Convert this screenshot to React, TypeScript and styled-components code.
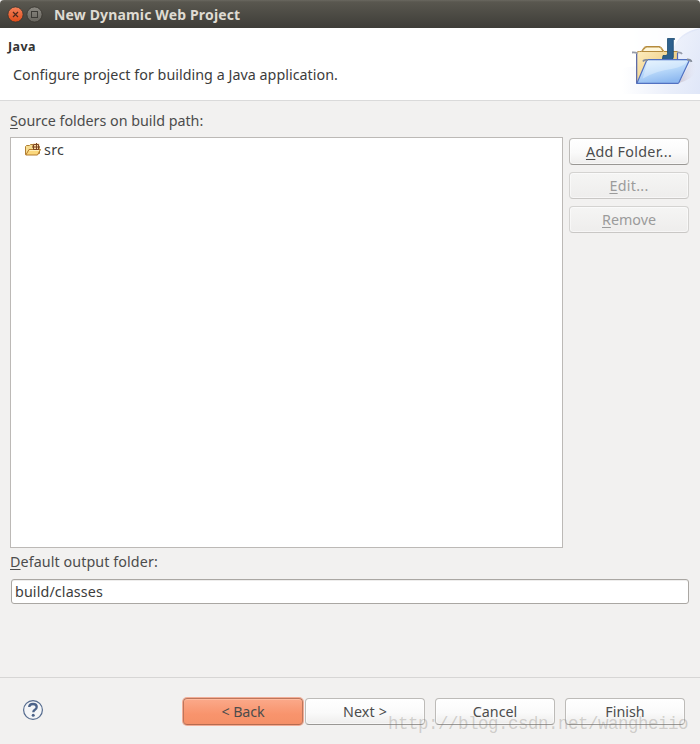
import React from "react";
import styled, { createGlobalStyle } from "styled-components";

const GlobalStyle = createGlobalStyle`
  * { box-sizing: border-box; }
  body { margin: 0; background: #f2f1f0; overflow: hidden; }
  button, input { font: inherit; }
`;

const Window = styled.div`
  position: relative;
  display: flex;
  flex-direction: column;
  width: 700px;
  height: 744px;
  background: #f2f1f0;
  color: #4c4c4c;
  font-family: "Noto Sans", "Open Sans", sans-serif;
  font-size: 14.3px;
  line-height: 20px;
`;

const TitleBar = styled.header`
  display: flex;
  align-items: center;
  height: 28px;
  flex: none;
  padding-left: 7px;
  background: linear-gradient(#6a6860 0, #59574f 2px, #3e3d38 100%);
  border-radius: 4px 4px 0 0;
`;

const Controls = styled.svg`
  display: block;
  flex: none;
`;

const Text = styled.span<{ $spacing?: number }>`
  letter-spacing: ${(p) => p.$spacing ?? 0}px;
  white-space: nowrap;
`;

const Title = styled(Text)`
  margin-left: 11px;
  padding-top: 1px;
  color: #dfdbd2;
  font-size: 14px;
  font-weight: 700;
`;

const Banner = styled.section`
  display: flex;
  justify-content: space-between;
  flex: none;
  height: 73px;
  background: #fff;
  border-bottom: 1px solid #dadada;
`;

const BannerText = styled.div`
  display: flex;
  flex-direction: column;
  padding: 9px 0 0 8px;
  color: #3c3c3c;
`;

const Heading = styled(Text)`
  color: #333;
  font-size: 12.5px;
  font-weight: 700;
`;

const Description = styled(Text)`
  margin: 8px 0 0 5px;
`;

const Main = styled.main`
  display: flex;
  flex-direction: column;
  flex: none;
  height: 577px;
  padding: 10px 11px 0 10px;
  border-bottom: 1px solid #d7d6d5;
`;

const Label = styled.label`
  display: block;
  height: 20px;
  flex: none;
`;

const Mnemonic = styled.span`
  text-decoration: underline;
  text-decoration-thickness: 1px;
  text-underline-offset: 2px;
`;

const Sources = styled.div`
  display: flex;
  gap: 6px;
  height: 411px;
  margin: 6px 0 4px;
`;

const FolderList = styled.div`
  width: 553px;
  padding: 2px 0 0 14px;
  background: #fff;
  border: 1px solid #bcb9b6;
`;

const FolderRow = styled.div`
  display: flex;
  align-items: center;
  gap: 3px;
  height: 20px;
  color: #3c3c3c;
`;

const ButtonColumn = styled.div`
  display: flex;
  flex-direction: column;
  gap: 7px;
  padding-top: 1px;
`;

const Button = styled.button<{ $active?: boolean }>`
  display: flex;
  align-items: center;
  justify-content: center;
  width: 120px;
  height: 27px;
  padding: 0;
  color: #4c4c4c;
  border: 1px solid ${(p) => (p.$active ? "#bd765b" : "#bdbbb8")};
  border-bottom-color: ${(p) => (p.$active ? "#b66b50" : "#999794")};
  border-radius: 4px;
  background: ${(p) =>
    p.$active
      ? "linear-gradient(#fba98a, #f8946d 60%, #f59068)"
      : "linear-gradient(#ffffff, #fafafa 55%, #eeedec)"};
  box-shadow: ${(p) =>
    p.$active ? "0 0 0 1px #f3ad96, inset 0 1px #ffbb9f" : "inset 0 0 0 1px rgba(255,255,255,.5)"};

  &:disabled {
    color: #9b9b9b;
    border-color: #d4d3d1;
    border-bottom-color: #c9c7c5;
    background: linear-gradient(#f5f5f4, #eeedec);
  }
`;

const OutputInput = styled.input`
  width: 678px;
  height: 25px;
  margin: 7px 0 0 1px;
  padding: 0 3px;
  color: #3c3c3c;
  letter-spacing: 0.12px;
  background: #fff;
  border: 1px solid #aaa7a3;
  border-radius: 3px;
  box-shadow: inset 0 1px #eeedec;
  outline: none;
`;

const Footer = styled.footer`
  display: flex;
  align-items: flex-start;
  height: 66px;
  padding: 20px 15px 0 22px;
`;

const Help = styled.svg`
  margin-top: 1px;
  flex: none;
`;

const Actions = styled.div`
  display: flex;
  gap: 10px;
  margin-left: auto;
`;

const Steps = styled.div`
  display: flex;
  gap: 2px;
`;

const Watermark = styled.div`
  position: absolute;
  left: 388px;
  top: 714px;
  color: rgba(120, 116, 108, 0.3);
  font-family: "Liberation Mono", monospace;
  font-size: 17.5px;
  letter-spacing: -0.5px;
  white-space: nowrap;
  pointer-events: none;
`;

const WindowControls = () => (
  <Controls width="36" height="18" viewBox="0 0 36 18">
    <defs>
      <linearGradient id="close" x2="0" y2="1">
        <stop stopColor="#f4835c" />
        <stop offset="1" stopColor="#df4b18" />
      </linearGradient>
      <linearGradient id="max" x2="0" y2="1">
        <stop stopColor="#8b8982" />
        <stop offset="1" stopColor="#66645d" />
      </linearGradient>
    </defs>
    <circle cx="8.5" cy="9.5" r="7.6" fill="url(#close)" stroke="#37352f" strokeWidth=".8" />
    <path d="m6 7 5 5m0-5-5 5" stroke="#4c291d" strokeWidth="1.2" />
    <circle cx="27.5" cy="9.5" r="7.6" fill="url(#max)" stroke="#37352f" strokeWidth=".8" />
    <rect x="24.5" y="6.5" width="6" height="6" fill="none" stroke="#3c3b36" />
  </Controls>
);

const JavaBanner = () => (
  <svg width="78" height="66" viewBox="622 28 78 66">
    <defs>
      <linearGradient id="wash">
        <stop stopColor="#fff" />
        <stop offset="1" stopColor="#dde4f7" />
      </linearGradient>
      <linearGradient id="arc" x1="0" y1="0" x2="1" y2="1">
        <stop stopColor="#f2f5fc" />
        <stop offset="1" stopColor="#e0e7f8" />
      </linearGradient>
      <linearGradient id="blue" x1="0" y1="0" x2=".4" y2="1">
        <stop stopColor="#e2f2ff" />
        <stop offset=".5" stopColor="#bddcfb" />
        <stop offset="1" stopColor="#8fbaf0" />
      </linearGradient>
      <linearGradient id="manila" x2="1" y2="1">
        <stop stopColor="#fff0c4" />
        <stop offset="1" stopColor="#e7bd68" />
      </linearGradient>
      <linearGradient id="shade">
        <stop stopColor="#b9aebb" />
        <stop offset="1" stopColor="#e8e3ee" stopOpacity="0" />
      </linearGradient>
    </defs>
    <path d="M622 28h78v66h-78Z" fill="url(#wash)" />
    <path d="M622 28h78q-21 4-26 20-7 16-52 20Z" fill="#fff" opacity=".85" />
    <path d="M700 29v65h-30V56q5-20 30-27Z" fill="url(#arc)" opacity=".8" />
    <path d="m679 83 12-21q7 3 5 9-3 8-17 12Z" fill="url(#shade)" opacity=".6" />
    <path d="M636.5 83V53q0-1.5 3-1.5h2l2.5-4q1-1 3-1h12q2 0 3 2l2 3h13.5V79Z" fill="url(#manila)" stroke="#b48a3d" />
    <path d="M642 51.5 645 48q1-1 2.5-1h11q2 0 3 2l1.5 2.5Z" fill="#fff7db" stroke="#b48a3d" />
    <path d="M637 54q0-1.8-5-1.5M677 52.5q4-.5 5 1.5" fill="none" stroke="#969ba9" strokeWidth="1.8" />
    <path d="M636.7 54v29M677.5 53v7" stroke="#5568b3" strokeWidth="1.2" />
    <path d="M667.5 38.5h7v1h-1.2V57q0 3-3 3h-8l.7-4.5h3q1.5 0 1.5-2Z" fill="#2d608e" stroke="#1b4a71" strokeWidth=".8" />
    <path d="M647 59.5h42q.7 0 .4.7l-10.5 22.4q-.2.7-1 .7h-41Z" fill="url(#blue)" stroke="#5271c1" strokeWidth="1.25" />
    <path d="M647.8 60.7h39.8q-4 6-15 8-17 2-30 10Z" fill="#fff" opacity=".3" />
    <path d="M643 61.5q1-2 4-1.5h1M687 59.5q4 0 4.5 2.5" fill="none" stroke="#858d9a" strokeWidth="1.8" />
  </svg>
);

const PackageFolder = () => (
  <svg width="16" height="16" viewBox="0 0 16 16">
    <path d="M.5 12.5v-8l1-1h3l1-1H8v2h6.5v7Z" fill="#f6dc91" stroke="#b18034" />
    <path d="M8 1.5h6.5v6H8Z" fill="#f9d9a0" />
    <path d="M.8 13 4 7.5h11.5l-3 5.5Z" fill="#fbd87d" stroke="#b47a2b" strokeLinejoin="round" />
    <path d="M4.5 8.5h9.5" stroke="#fff0bc" />
    <path d="M8.5 2.5h5v5h-5Zm-1.5 2.5h8M11.5 1v7" fill="none" stroke="#7c4520" />
  </svg>
);

export default function App() {
  return (
    <>
      <GlobalStyle />
      <Window>
        <TitleBar>
          <WindowControls />
          <Title $spacing={0.15}>New Dynamic Web Project</Title>
        </TitleBar>
        <Banner>
          <BannerText>
            <Heading $spacing={0.4}>Java</Heading>
            <Description $spacing={0.03}>Configure project for building a Java application.</Description>
          </BannerText>
          <JavaBanner />
        </Banner>
        <Main>
          <Label>
            <Text $spacing={-0.01}><Mnemonic>S</Mnemonic>ource folders on build path:</Text>
          </Label>
          <Sources>
            <FolderList>
              <FolderRow>
                <PackageFolder />
                <Text $spacing={0.3}>src</Text>
              </FolderRow>
            </FolderList>
            <ButtonColumn>
              <Button><Text $spacing={0.3}><Mnemonic>A</Mnemonic>dd Folder...</Text></Button>
              <Button disabled><Text $spacing={0.3}><Mnemonic>E</Mnemonic>dit...</Text></Button>
              <Button disabled><Text><Mnemonic>R</Mnemonic>emove</Text></Button>
            </ButtonColumn>
          </Sources>
          <Label htmlFor="output">
            <Text $spacing={0.09}><Mnemonic>D</Mnemonic>efault output folder:</Text>
          </Label>
          <OutputInput id="output" defaultValue="build/classes" />
        </Main>
        <Footer>
          <Help width="22" height="22" viewBox="0 0 22 22">
            <circle cx="11" cy="11" r="9.4" fill="#f4f5f7" stroke="#556b8e" strokeWidth="1.2" />
            <path d="M7.2 8q.2-3 3.8-3 3.7 0 3.7 3 0 1.7-1.8 2.8-1.6 1-1.6 2.4" fill="none" stroke="#4c6389" strokeWidth="2.3" />
            <circle cx="11.2" cy="16.3" r="1.5" fill="#4c6389" />
          </Help>
          <Actions>
            <Steps>
              <Button $active><Text $spacing={-0.15}>&lt; Back</Text></Button>
              <Button><Text $spacing={0.15}>Next &gt;</Text></Button>
            </Steps>
            <Button><Text>Cancel</Text></Button>
            <Button><Text>Finish</Text></Button>
          </Actions>
        </Footer>
        <Watermark>http://blog.csdn.net/wangheiio</Watermark>
      </Window>
    </>
  );
}
